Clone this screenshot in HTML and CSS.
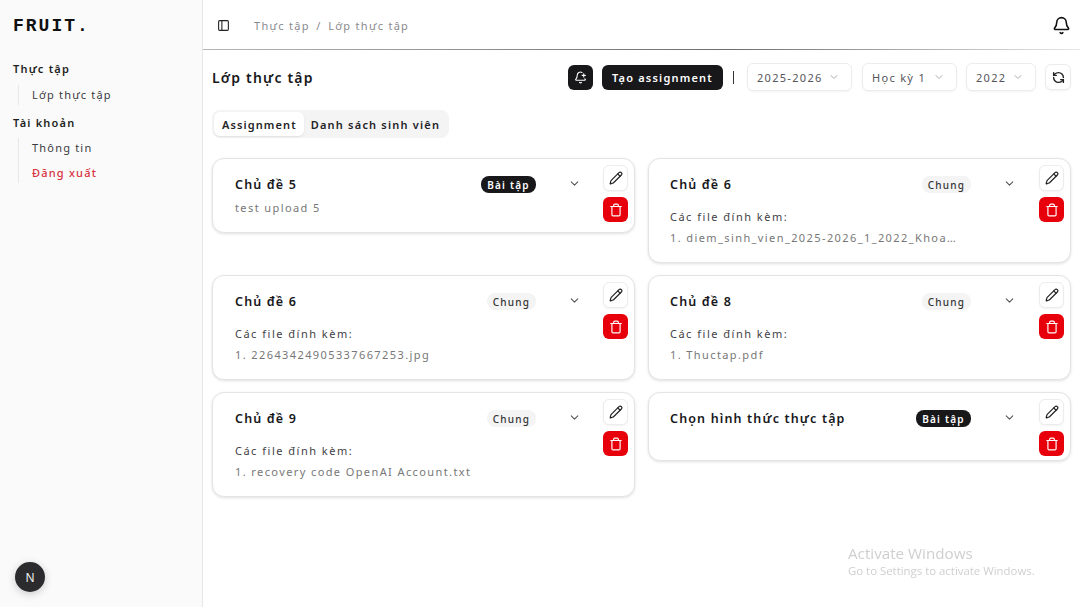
FILE: index.html
```html
<!DOCTYPE html>
<html lang="vi">
<head>
<meta charset="utf-8">
<title>Lớp thực tập</title>
<link rel="stylesheet" href="styles.css">
</head>
<body>
<svg class="defs" width="0" height="0" aria-hidden="true">
  <symbol id="i-chev" viewBox="0 0 24 24"><path d="m6 9 6 6 6-6"/></symbol>
  <symbol id="i-pencil" viewBox="0 0 24 24"><path d="M21.174 6.812a1 1 0 0 0-3.986-3.987L3.842 16.174a2 2 0 0 0-.5.83l-1.321 4.352a.5.5 0 0 0 .623.622l4.353-1.32a2 2 0 0 0 .83-.497z"/><path d="m15 5 4 4"/></symbol>
  <symbol id="i-trash" viewBox="0 0 24 24"><path d="M3 6h18"/><path d="M19 6v14c0 1-1 2-2 2H7c-1 0-2-1-2-2V6"/><path d="M8 6V4c0-1 1-2 2-2h4c1 0 2 1 2 2v2"/></symbol>
</svg>
<div class="app">
  <aside class="sidebar">
    <div class="logo">FRUIT.</div>
    <nav class="nav">
      <div class="nav-title">Thực tập</div>
      <div class="nav-sub"><a class="nav-link">Lớp thực tập</a></div>
      <div class="nav-title">Tài khoản</div>
      <div class="nav-sub"><a class="nav-link">Thông tin</a><a class="nav-link danger">Đăng xuất</a></div>
    </nav>
    <div class="sidebar-foot"><span class="next-badge">N</span></div>
  </aside>
  <div class="content">
    <header class="topbar">
      <svg class="ic panel" viewBox="0 0 24 24"><rect x="3" y="3" width="18" height="18" rx="2"/><path d="M9 3v18"/></svg>
      <div class="crumbs"><span>Thực tập</span><span>/</span><span>Lớp thực tập</span></div>
      <svg class="ic bell" viewBox="0 0 24 24"><path d="M10.268 21a2 2 0 0 0 3.464 0"/><path d="M3.262 15.326A1 1 0 0 0 4 17h16a1 1 0 0 0 .74-1.673C19.41 13.956 18 12.499 18 8A6 6 0 0 0 6 8c0 4.499-1.411 5.956-2.738 7.326"/></svg>
    </header>
    <main class="main">
      <div class="toolbar">
        <h1 class="page-title">Lớp thực tập</h1>
        <button class="btn-dark btn-icon"><svg class="ic s13" viewBox="0 0 24 24"><path d="M10.268 21a2 2 0 0 0 3.464 0"/><path d="M15 8h6"/><path d="M18 5v6"/><path d="M20.002 14.464a9 9 0 0 0 .738.863A1 1 0 0 1 20 17H4a1 1 0 0 1-.74-1.673C4.59 13.956 6 12.499 6 8a6 6 0 0 1 8.75-5.332"/></svg></button>
        <button class="btn-dark btn-text">Tạo assignment</button>
        <span class="sep"></span>
        <div class="select w105"><span>2025-2026</span><svg class="ic chev-s"><use href="#i-chev"/></svg></div>
        <div class="select w95"><span>Học kỳ 1</span><svg class="ic chev-s"><use href="#i-chev"/></svg></div>
        <div class="select w70"><span>2022</span><svg class="ic chev-s"><use href="#i-chev"/></svg></div>
        <button class="btn-refresh"><svg class="ic s13 thick" viewBox="0 0 24 24"><path d="M21 12a9 9 0 0 0-9-9 9.75 9.75 0 0 0-6.74 2.74L3 8"/><path d="M3 3v5h5"/><path d="M3 12a9 9 0 0 0 9 9 9.75 9.75 0 0 0 6.74-2.74L21 16"/><path d="M16 16h5v5"/></svg></button>
      </div>
      <div class="tabs"><span class="tab active">Assignment</span><span class="tab">Danh sách sinh viên</span></div>
      <section class="grid">
        <article class="card">
          <div class="card-main">
            <div class="card-head"><h2 class="card-title">Chủ đề 5</h2><span class="badge dark">Bài tập</span><svg class="ic chev"><use href="#i-chev"/></svg></div>
            <p class="desc">test upload 5</p>
          </div>
          <div class="actions"><button class="act edit"><svg class="ic s14"><use href="#i-pencil"/></svg></button><button class="act del"><svg class="ic s14"><use href="#i-trash"/></svg></button></div>
        </article>
        <article class="card">
          <div class="card-main">
            <div class="card-head"><h2 class="card-title">Chủ đề 6</h2><span class="badge light">Chung</span><svg class="ic chev"><use href="#i-chev"/></svg></div>
            <p class="label">Các file đính kèm:</p>
            <p class="file">1. diem_sinh_vien_2025-2026_1_2022_Khoa_Cong_Nghe_Thong_Tin.xlsx</p>
          </div>
          <div class="actions"><button class="act edit"><svg class="ic s14"><use href="#i-pencil"/></svg></button><button class="act del"><svg class="ic s14"><use href="#i-trash"/></svg></button></div>
        </article>
        <article class="card">
          <div class="card-main">
            <div class="card-head"><h2 class="card-title">Chủ đề 6</h2><span class="badge light">Chung</span><svg class="ic chev"><use href="#i-chev"/></svg></div>
            <p class="label">Các file đính kèm:</p>
            <p class="file">1. 22643424905337667253.jpg</p>
          </div>
          <div class="actions"><button class="act edit"><svg class="ic s14"><use href="#i-pencil"/></svg></button><button class="act del"><svg class="ic s14"><use href="#i-trash"/></svg></button></div>
        </article>
        <article class="card">
          <div class="card-main">
            <div class="card-head"><h2 class="card-title">Chủ đề 8</h2><span class="badge light">Chung</span><svg class="ic chev"><use href="#i-chev"/></svg></div>
            <p class="label">Các file đính kèm:</p>
            <p class="file">1. Thuctap.pdf</p>
          </div>
          <div class="actions"><button class="act edit"><svg class="ic s14"><use href="#i-pencil"/></svg></button><button class="act del"><svg class="ic s14"><use href="#i-trash"/></svg></button></div>
        </article>
        <article class="card">
          <div class="card-main">
            <div class="card-head"><h2 class="card-title">Chủ đề 9</h2><span class="badge light">Chung</span><svg class="ic chev"><use href="#i-chev"/></svg></div>
            <p class="label">Các file đính kèm:</p>
            <p class="file">1. recovery code OpenAI Account.txt</p>
          </div>
          <div class="actions"><button class="act edit"><svg class="ic s14"><use href="#i-pencil"/></svg></button><button class="act del"><svg class="ic s14"><use href="#i-trash"/></svg></button></div>
        </article>
        <article class="card">
          <div class="card-main">
            <div class="card-head"><h2 class="card-title">Chọn hình thức thực tập</h2><span class="badge dark">Bài tập</span><svg class="ic chev"><use href="#i-chev"/></svg></div>
          </div>
          <div class="actions"><button class="act edit"><svg class="ic s14"><use href="#i-pencil"/></svg></button><button class="act del"><svg class="ic s14"><use href="#i-trash"/></svg></button></div>
        </article>
      </section>
    </main>
  </div>
</div>
<div class="watermark"><div class="wm-1">Activate Windows</div><div class="wm-2">Go to Settings to activate Windows.</div></div>
</body>
</html>
```
FILE: styles.css
```css
* { box-sizing: border-box; }
html, body { margin: 0; height: 100%; overflow: hidden; }
body { font-family: "Noto Sans", "Open Sans", sans-serif; font-size: 11px; letter-spacing: 1.4px; color: #18181b; background: #fff; }
.defs { position: absolute; }
h1, h2, p { margin: 0; }
button { font: inherit; letter-spacing: inherit; border: 0; padding: 0; display: flex; align-items: center; justify-content: center; }
.ic { fill: none; stroke: currentColor; stroke-width: 2; stroke-linecap: round; stroke-linejoin: round; display: block; flex: none; }
.thick { stroke-width: 2.6; }
.s13 { width: 13px; height: 13px; }
.s14 { width: 14px; height: 14px; }

.app { display: flex; height: 607px; }
.sidebar { width: 203px; flex: none; background: #fafafa; border-right: 1px solid #e6e6e8; display: flex; flex-direction: column; padding: 0 0 15px 13px; }
.logo { font-family: "Liberation Mono", monospace; font-weight: 700; font-size: 18px; letter-spacing: 2px; line-height: 20px; padding-top: 16px; color: #111; }
.nav { margin-top: 24px; flex: 1; letter-spacing: 1.2px; }
.nav-title { font-size: 11px; font-weight: 600; line-height: 18px; color: #1f1f22; }
.nav-title:first-child { padding-bottom: 1px; }
.nav-sub { margin: 6px 0 9px 5px; padding: 1px 0 1px 13px; border-left: 1px solid #e8e8ea; display: flex; flex-direction: column; gap: 7px; }
.nav-link { font-size: 11px; line-height: 18px; color: #3a3a3f; }
.nav-link.danger { color: #d8313f; font-weight: 500; }
.sidebar-foot { display: flex; padding-left: 2px; }
.next-badge { width: 30px; height: 30px; border-radius: 50%; background: #2b2b2d; color: #eee; font-size: 12px; letter-spacing: 0; display: flex; align-items: center; justify-content: center; box-shadow: 0 2px 8px rgba(0,0,0,.2); }

.content { flex: 1; min-width: 0; display: flex; flex-direction: column; }
.topbar { height: 50px; flex: none; display: flex; align-items: center; padding: 0 9px 0 14px; position: relative; }
.topbar::after { content: ""; position: absolute; left: 0; right: 0; bottom: 0; height: 1px; background: linear-gradient(to right, #b5b5b8, #6d6d70 60%, #e8e8e8); }
.panel { width: 13px; height: 13px; color: #222; }
.crumbs { margin-left: 24px; color: #8a8a90; font-size: 11px; flex: 1; display: flex; gap: 6.5px; letter-spacing: 1.3px; }
.bell { width: 19px; height: 19px; color: #111; }

.main { flex: 1; padding: 13px 9px 0 9px; }
.toolbar { display: flex; align-items: center; height: 28px; }
.page-title { font-size: 14px; font-weight: 600; line-height: 28px; padding-top: 1px; flex: 1; letter-spacing: 1.2px; }
.btn-dark { background: #18181b; color: #fff; border-radius: 6px; height: 25px; }
.btn-icon { width: 25px; }
.btn-text { width: 121px; margin-left: 9px; font-size: 11px; font-weight: 600; letter-spacing: 1.2px; }
.sep { width: 1px; height: 13px; background: #333; margin: 1px 13px 0 10px; }
.select { height: 28px; display: flex; align-items: center; justify-content: space-between; padding: 0 11px 0 9px; border: 1px solid #ececee; border-radius: 6px; margin-right: 9px; color: #55555a; box-shadow: 0 1px 2px rgba(0,0,0,.05); font-size: 11px; letter-spacing: 1.3px; }
.w105 { width: 105px; margin-right: 10px; }
.w95 { width: 95px; }
.w70 { width: 70px; }
.chev-s { width: 12px; height: 12px; color: #aaa; }
.btn-refresh { width: 26px; height: 26px; background: #fff; border: 1px solid #ececee; border-radius: 6px; box-shadow: 0 1px 2px rgba(0,0,0,.05); color: #222; }

.tabs { display: inline-flex; margin-top: 19px; height: 28px; padding: 2px; background: #f4f4f5; border-radius: 8px; vertical-align: top; letter-spacing: 1.2px; }
.tab { padding: 1px 7px 0 7px; display: flex; align-items: center; font-size: 11px; font-weight: 600; color: #232326; line-height: 24px; }
.tab.active { background: #fff; border-radius: 6px; box-shadow: 0 1px 2px rgba(0,0,0,.08); padding: 1px 7px 0 8px; letter-spacing: 1.1px; }

.grid { display: grid; grid-template-columns: 423px 423px; column-gap: 13px; row-gap: 12px; align-items: start; margin-top: 20px; }
.card { display: flex; background: #fff; border: 1px solid #e4e4e7; border-radius: 12px; box-shadow: 0 1px 3px rgba(0,0,0,.12); }
.card-main { flex: 1; min-width: 0; padding: 16px 22px 15px 22px; }
.card:nth-child(even) .card-main { padding-left: 21px; padding-right: 23px; }
.card-head { display: flex; align-items: center; height: 20px; }
.card-title { flex: 1; font-size: 12.5px; font-weight: 600; line-height: 20px; white-space: nowrap; letter-spacing: 1.15px; }
.badge { height: 17px; margin-top: -1px; border-radius: 8px; display: flex; align-items: center; justify-content: center; font-size: 10px; font-weight: 500; letter-spacing: 1.2px; }
.badge.dark { width: 55px; background: #18181b; color: #fff; font-weight: 600; }
.badge.light { width: 49px; background: #f4f4f5; color: #333; }
.chev { width: 13px; height: 13px; color: #555; margin-left: 32px; margin-top: -4px; }
.desc { margin-top: 4px; line-height: 18px; color: #777; font-size: 11px; }
.label { margin-top: 13px; line-height: 18px; font-size: 11px; color: #3f3f46; letter-spacing: 1.5px; }
.file { margin-top: 3px; line-height: 18px; font-size: 11px; color: #777; white-space: nowrap; overflow: hidden; text-overflow: ellipsis; max-width: 287px; }
.actions { width: 31px; flex: none; display: flex; flex-direction: column; gap: 6px; padding-top: 6px; padding-bottom: 4px; }
.act { width: 25px; height: 25px; border-radius: 6px; }
.edit { height: 26px; background: #fff; border: 1px solid #ececee; color: #222; box-shadow: 0 1px 2px rgba(0,0,0,.05); }
.del { background: #e7000b; color: #fff; }

.watermark { position: fixed; left: 848px; top: 544px; color: #cfcfd1; font-family: "Open Sans", sans-serif; letter-spacing: 0; pointer-events: none; }
.wm-1 { font-size: 15.2px; line-height: 19px; }
.wm-2 { font-size: 11.4px; line-height: 16px; }
```
